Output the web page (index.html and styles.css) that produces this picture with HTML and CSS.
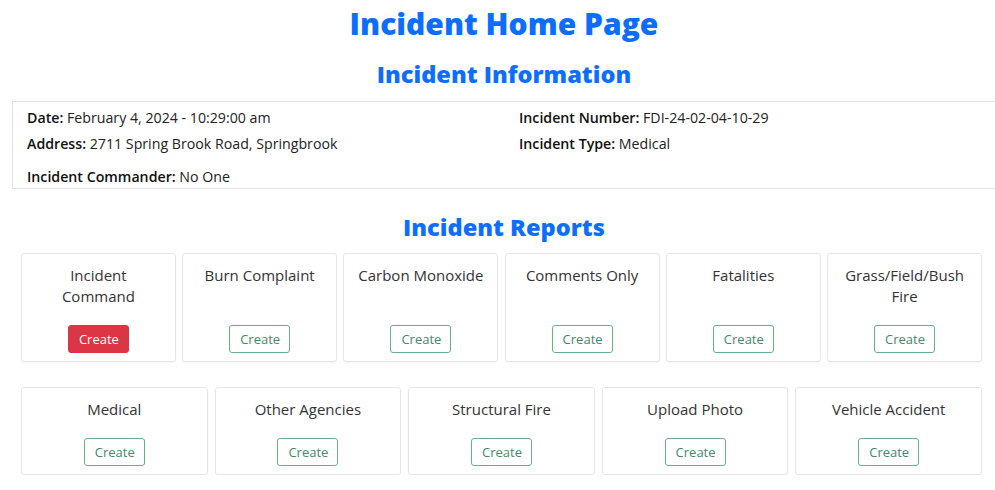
FILE: index.html
```html
<!DOCTYPE html>
<html lang="en">
<head>
<meta charset="utf-8">
<title>Incident Home Page</title>
<link rel="stylesheet" href="styles.css">
</head>
<body>
<div class="page">
  <h1 class="title">Incident Home Page</h1>
  <h2 class="subtitle">Incident Information</h2>
  <section class="info">
    <div class="info-grid">
      <div class="info-col">
        <p class="info-line"><span class="lbl">Date:</span> February 4, 2024 - 10:29:00 am</p>
        <p class="info-line"><span class="lbl">Address:</span> 2711 Spring Brook Road, Springbrook</p>
      </div>
      <div class="info-col">
        <p class="info-line"><span class="lbl">Incident Number:</span> FDI-24-02-04-10-29</p>
        <p class="info-line"><span class="lbl">Incident Type:</span> Medical</p>
      </div>
    </div>
    <p class="info-line commander"><span class="lbl">Incident Commander:</span> No One</p>
  </section>
  <h2 class="subtitle reports-title">Incident Reports</h2>
  <div class="cards six">
    <div class="card"><div class="card-title">Incident Command</div><button class="btn btn-red">Create</button></div>
    <div class="card"><div class="card-title">Burn Complaint</div><button class="btn btn-green">Create</button></div>
    <div class="card"><div class="card-title">Carbon Monoxide</div><button class="btn btn-green">Create</button></div>
    <div class="card"><div class="card-title">Comments Only</div><button class="btn btn-green">Create</button></div>
    <div class="card"><div class="card-title">Fatalities</div><button class="btn btn-green">Create</button></div>
    <div class="card"><div class="card-title">Grass/Field/Bush Fire</div><button class="btn btn-green">Create</button></div>
  </div>
  <div class="cards five">
    <div class="card"><div class="card-title">Medical</div><button class="btn btn-green">Create</button></div>
    <div class="card"><div class="card-title">Other Agencies</div><button class="btn btn-green">Create</button></div>
    <div class="card"><div class="card-title">Structural Fire</div><button class="btn btn-green">Create</button></div>
    <div class="card"><div class="card-title">Upload Photo</div><button class="btn btn-green">Create</button></div>
    <div class="card"><div class="card-title">Vehicle Accident</div><button class="btn btn-green">Create</button></div>
  </div>
</div>
</body>
</html>
```

FILE: styles.css
```css
html, body {
  margin: 0;
  padding: 0;
  overflow: hidden;
  background: #ffffff;
}
body {
  font-family: "Open Sans", "Liberation Sans", sans-serif;
  color: #212529;
}
.page {
  width: 984px;
  margin-left: 12px;
  padding-top: 4px;
}
.title {
  margin: 0;
  text-align: center;
  color: #0d6efd;
  font-size: 30px;
  font-weight: 800;
  line-height: 40px;
}
.subtitle {
  margin: 14px 0 0;
  text-align: center;
  color: #0d6efd;
  font-size: 23.6px;
  font-weight: 800;
  line-height: 32px;
}
.info {
  margin-top: 11px;
  border: 1px solid #e2e2e2;
  padding: 3px 14px 1px;
}
.info-grid {
  display: grid;
  grid-template-columns: 492px 1fr;
}
.info-line {
  margin: 0;
  font-size: 14.2px;
  line-height: 26px;
  color: #222;
}
.lbl {
  font-weight: 600;
  color: #111;
}
.commander {
  margin-top: 10px;
  line-height: 20px;
}
.reports-title {
  margin-top: 22px;
}
.cards {
  display: grid;
  margin: 0 14px 0 9px;
}
.cards.six {
  margin-top: 10px;
  grid-template-columns: repeat(6, 1fr);
  column-gap: 6.4px;
}
.cards.five {
  margin-top: 25px;
  grid-template-columns: repeat(5, 1fr);
  column-gap: 7px;
}
.card {
  display: flex;
  flex-direction: column;
  align-items: center;
  border: 1px solid #e6e6e6;
  border-radius: 3px;
  box-shadow: 0 1px 2px rgba(0,0,0,0.04);
  padding: 11px 12px 8px;
  text-align: center;
}
.six .card { height: 109px; box-sizing: border-box; }
.five .card { height: 88px; box-sizing: border-box; }
.card-title {
  font-size: 15px;
  line-height: 21px;
  color: #333;
}
.btn {
  margin-top: auto;
  font-family: inherit;
  font-size: 13px;
  line-height: 18px;
  padding: 4px 10px;
  border-radius: 3px;
  width: 61px;
  cursor: pointer;
}
.btn-red {
  background: #dc3545;
  color: #fff;
  border: 1px solid #dc3545;
}
.btn-green {
  background: #fff;
  color: #3f8a68;
  border: 1px solid #6aae8e;
}
```
